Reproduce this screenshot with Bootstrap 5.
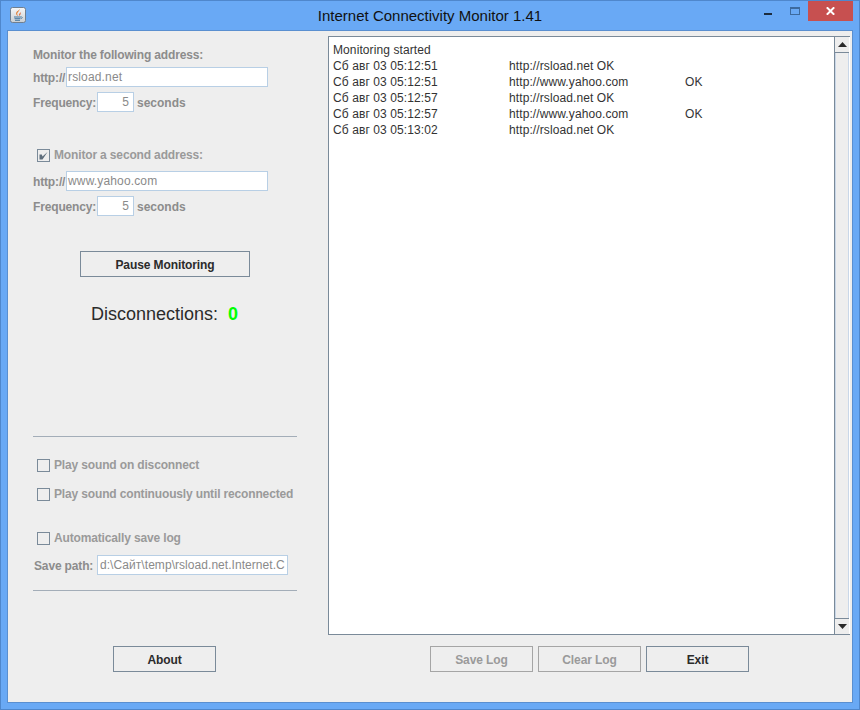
<!DOCTYPE html>
<html lang="en">
<head>
<meta charset="utf-8">
<title>Internet Connectivity Monitor 1.41</title>
<link rel="stylesheet" href="https://cdn.jsdelivr.net/npm/bootstrap@5.3.0/dist/css/bootstrap.min.css">
<style>
html,body{margin:0;height:710px;overflow:hidden;background:#69a9f5}
body,.win,.win *{font-family:"Liberation Sans",Arial,sans-serif}
.win{width:860px;height:710px;background:#69a9f5;border:1px solid #4f87cc}
.tbar{height:29px;display:grid;grid-template-columns:1fr auto 1fr;align-items:start}
.ttl{font-size:15px;line-height:29px;color:#111}
.japp{display:block;margin:6px 0 0 9px}
.ctrls{justify-content:flex-end;padding-right:6px}
.cmin{width:8px;height:2px;background:#1c2c3e;margin:12px 18px 0 0}
.cres{width:10px;height:8px;border:1px solid #3d6a9e;border-top-width:2px;margin:6px 8px 0 0}
.cclose{width:45px;height:20px;background:#c75050;display:flex;align-items:center;justify-content:center}
.client{width:846px;height:673px;margin-left:6px;background:#eeeeee;border:1px solid #5a8fd0}
.lpane{width:320px;padding-left:25px;font-size:12px}
.rpane{width:524px}
.lbl{font-weight:700;color:#8c8c8c;font-size:12px;line-height:16px;white-space:nowrap;letter-spacing:-.15px}
.lbl.dim{color:#9a9a9a}
.fldrow .lbl{padding-top:2px}
.lbl-http{width:33px}
.lbl-freq{width:64px}
.lbl-save{width:64px;padding-left:1px}
.lbl-sec{letter-spacing:0;margin-left:3px}
.tfield{height:20px;border:1px solid #b8cfe5;background:#fff;color:#8a8a8a;font-size:12px;line-height:19px;padding:0 1px;overflow:hidden;white-space:nowrap;letter-spacing:.15px}
.f-url{width:202px}
.f-num{width:37px;text-align:right;padding-right:4px}
.f-path{width:191px;letter-spacing:.05px;padding-left:2px}
.box{width:13px;height:13px;border:1px solid #7a8a99;background:#eee;display:block;flex:none}
.box svg{display:block}
.jbtn{display:block;height:26px;padding:2px 0 0;background:#eee;border:1px solid #7a8a99;border-radius:0;font-size:12px;font-weight:700;color:#2b2b2b;line-height:22px;text-align:center;letter-spacing:-.1px}
.jbtn:disabled{opacity:1;background:#eee;border-color:#a5a5a5;color:#9a9a9a}
.w-pause{width:170px;margin-left:47px}
.w-std{width:103px}
.w-about{margin-left:80px}
.jrule{height:1px;width:264px;background:#a3adb8;margin:0;opacity:1;border:0}
.disc{height:24px;margin-left:58px;font-size:18px;line-height:24px;color:#2b2b2b}
.zero{color:#00ff00;font-weight:700;margin-left:10px}
.m16{margin-top:16px}.m4{margin-top:4px}.m5{margin-top:5px}.m35{margin-top:35px}.m8{margin-top:8px}
.m25{margin-top:25px}.m110{margin-top:110px}.m20{margin-top:20px}.m13{margin-top:13px}.m28{margin-top:28px}
.m9{margin-top:9px}.m15{margin-top:15px}.m55{margin-top:55px}
.gl4{gap:4px}
.cbrow{padding-left:4px}
.logbox{width:522px;height:599px;margin-top:5px;background:#fff;border:1px solid #7a8a99;border-width:1px 0 1px 1px}
.logtxt{padding:5px 0 0 4px;font-size:12px;line-height:16px;color:#333}
.lrow{display:flex;height:16px;white-space:nowrap;letter-spacing:.1px}
.cdate{width:176px}
.curl{width:176px}
.sbar{width:16px;background:#eee;border-left:1px solid #7a8a99;border-right:1px solid #fff}
.sarrow{height:16px;display:flex;align-items:center;justify-content:center;background:#eee}
.sup{border-bottom:1px solid #7a8a99}
.sdown{border-top:1px solid #7a8a99}
.strack{background:#eeeeee;border-left:1px solid #c9d7e8;border-right:1px solid #c9d7e8}
.bbar{margin-top:11px;margin-left:102px;gap:5px}
</style>
</head>
<body>
<div class="win">
  <div class="tbar">
    <div>
      <svg class="japp" width="17" height="17" viewBox="0 0 17 17" aria-hidden="true">
        <defs><linearGradient id="jg" x1="0" y1="0" x2="0" y2="1"><stop offset="0" stop-color="#f6f7f8"/><stop offset="1" stop-color="#c9ced3"/></linearGradient></defs>
        <rect x=".5" y=".5" width="15" height="15" rx="2" fill="url(#jg)" stroke="#6f7f90"/>
        <path d="M9.5 2C10 4 7 5 7.2 7c.1 1 .8 1.5 1 2C7 8.500 6 7.500 6.200 6 6.500 4.200 9 3.800 9.500 2Z" fill="#e2711d"/>
        <path d="M10.500 5c-.3 1.200-1.500 1.500-1.300 3 .1.500.3.800.4 1 .3-1 1.500-2 .9-4Z" fill="#d9541e"/>
        <path d="M4 10h7M4.500 11.700h6M5 13.300h5" stroke="#45779f" stroke-width="1" fill="none"/>
        <path d="M11 10c1.500-.5 2 1.200 0 1.700" stroke="#45779f" stroke-width=".8" fill="none"/>
      </svg>
    </div>
    <div class="ttl">Internet Connectivity Monitor 1.41</div>
    <div class="d-flex ctrls">
      <span class="cmin"></span>
      <span class="cres"></span>
      <span class="cclose"><svg width="9" height="8" viewBox="0 0 9 8" aria-hidden="true"><path d="M.8.300 8.200 7.700M8.200.300.8 7.700" stroke="#fff" stroke-width="2" fill="none"/></svg></span>
    </div>
  </div>
  <div class="client d-flex">
    <div class="lpane">
      <div class="lbl m16">Monitor the following address:</div>
      <div class="d-flex align-items-center fldrow m4"><span class="lbl lbl-http">http://</span><div class="tfield f-url">rsload.net</div></div>
      <div class="d-flex align-items-center fldrow m5"><span class="lbl lbl-freq">Frequency:</span><div class="tfield f-num">5</div><span class="lbl lbl-sec">seconds</span></div>
      <div class="d-flex align-items-center m35 gl4 cbrow">
        <span class="box"><svg width="11" height="11" viewBox="0 0 11 11" aria-hidden="true"><path d="M1.500 4.500 1.500 9.500 4.500 9.500 9.500 2 4.500 6.500 3.800 4.500Z" fill="#5f6e7c"/></svg></span>
        <span class="lbl dim">Monitor a second address:</span>
      </div>
      <div class="d-flex align-items-center fldrow m8"><span class="lbl lbl-http">http://</span><div class="tfield f-url">www.yahoo.com</div></div>
      <div class="d-flex align-items-center fldrow m5"><span class="lbl lbl-freq">Frequency:</span><div class="tfield f-num">5</div><span class="lbl lbl-sec">seconds</span></div>
      <button type="button" class="btn jbtn w-pause m35">Pause Monitoring</button>
      <div class="disc m25">Disconnections:<span class="zero">0</span></div>
      <hr class="jrule m110">
      <div class="d-flex align-items-center m20 gl4 cbrow"><span class="box"></span><span class="lbl dim">Play sound on disconnect</span></div>
      <div class="d-flex align-items-center m13 gl4 cbrow"><span class="box"></span><span class="lbl dim">Play sound continuously until reconnected</span></div>
      <div class="d-flex align-items-center m28 gl4 cbrow"><span class="box"></span><span class="lbl dim">Automatically save log</span></div>
      <div class="d-flex align-items-center fldrow m9"><span class="lbl lbl-save">Save path:</span><div class="tfield f-path">d:\Сайт\temp\rsload.net.Internet.C</div></div>
      <hr class="jrule m15">
      <button type="button" class="btn jbtn w-std w-about m55">About</button>
    </div>
    <div class="rpane">
      <div class="logbox d-flex">
        <div class="logtxt flex-grow-1">
          <div class="lrow">Monitoring started</div>
          <div class="lrow"><span class="cdate">Сб авг 03 05:12:51</span><span>http://rsload.net OK</span></div>
          <div class="lrow"><span class="cdate">Сб авг 03 05:12:51</span><span class="curl">http://www.yahoo.com</span><span>OK</span></div>
          <div class="lrow"><span class="cdate">Сб авг 03 05:12:57</span><span>http://rsload.net OK</span></div>
          <div class="lrow"><span class="cdate">Сб авг 03 05:12:57</span><span class="curl">http://www.yahoo.com</span><span>OK</span></div>
          <div class="lrow"><span class="cdate">Сб авг 03 05:13:02</span><span>http://rsload.net OK</span></div>
        </div>
        <div class="sbar d-flex flex-column">
          <div class="sarrow sup"><svg width="9" height="5" viewBox="0 0 9 5" aria-hidden="true"><path d="M4.500 0 9 5H0Z" fill="#2b2b2b"/></svg></div>
          <div class="strack flex-grow-1"></div>
          <div class="sarrow sdown"><svg width="9" height="5" viewBox="0 0 9 5" aria-hidden="true"><path d="M0 0H9L4.500 5Z" fill="#2b2b2b"/></svg></div>
        </div>
      </div>
      <div class="d-flex bbar">
        <button type="button" class="btn jbtn w-std" disabled>Save Log</button>
        <button type="button" class="btn jbtn w-std" disabled>Clear Log</button>
        <button type="button" class="btn jbtn w-std">Exit</button>
      </div>
    </div>
  </div>
</div>
<script src="https://cdn.jsdelivr.net/npm/bootstrap@5.3.0/dist/js/bootstrap.bundle.min.js"></script>
</body>
</html>
